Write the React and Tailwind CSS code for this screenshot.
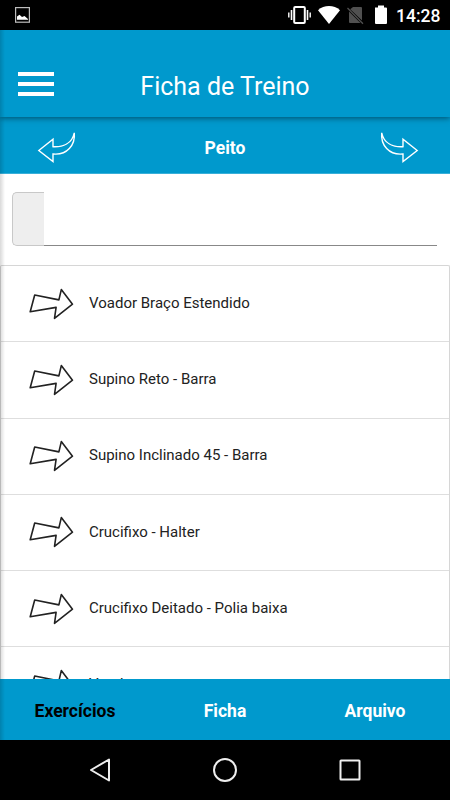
import React from 'react';

const exercises = [
    'Voador Braço Estendido',
    'Supino Reto - Barra',
    'Supino Inclinado 45 - Barra',
    'Crucifixo - Halter',
    'Crucifixo Deitado - Polia baixa',
    'Voador',
];

const tabs = ['Exercícios', 'Ficha', 'Arquivo'];

const StatusBar = () => (
    <div className="h-[30px] shrink-0 bg-black flex items-center justify-between pl-[15px] pr-[10px]">
        <svg width="15" height="16" viewBox="0 0 15 16">
            <rect x="0.6" y="0.6" width="13.8" height="14.6" fill="none" stroke="#bdbdbd" strokeWidth="1.2" />
            <path d="M2 12.8V9.5L4.5 7.8L7 10L9.5 9L13 12V12.8Z" fill="#fff" />
        </svg>
        <div className="flex items-center">
            <svg width="100" height="20" viewBox="288 5 100 20">
                <rect x="294.2" y="7" width="10.6" height="16" rx="1" fill="none" stroke="#fff" strokeWidth="2" />
                <path d="M291.5 10V20M307.5 10V20" stroke="#fff" strokeWidth="1.6" />
                <path d="M288.8 12.5V17.5M310.2 12.5V17.5" stroke="#fff" strokeWidth="1.4" />
                <path d="M318 10.2C324 4.6 334 4.6 340 10.2L329 24Z" fill="#fff" />
                <path d="M353 7H361Q362 7 362 8V20.6L350.2 9.2ZM349 11.5L360.5 23H350Q349 23 349 22Z" fill="#505050" />
                <path d="M347.5 8L363 23.8" stroke="#505050" strokeWidth="1.3" />
                <path d="M375 7.5H378V5.5H384V7.5H386Q387 7.5 387 8.5V23Q387 24 386 24H376Q375 24 375 23Z" fill="#fff" />
            </svg>
            <span className="ml-2 w-[44px] text-white text-[17.5px] leading-[20px] font-medium translate-y-px">14:28</span>
        </div>
    </div>
);

const CurvedArrow = ({ flipped }) => (
    <svg width="40" height="34" viewBox="0 0 40 34" className={flipped ? 'mt-[7px] -scale-x-100' : 'mt-[7px]'}>
        <path
            d="M1.8 18.5L16 7.3V14.7C26 15.2 35 11.5 37.3 .8C38.5 13 30 23.5 16 22V29.6Z"
            fill="none"
            stroke="#fff"
            strokeWidth="1.4"
        />
    </svg>
);

const RowArrow = () => (
    <svg width="46" height="34" viewBox="0 0 46 34" className="shrink-0">
        <path
            d="M1.2 24.8L5.7 8L29.9 12.9L32.3 2.6L43.5 17.2L25.5 31.3L27.1 20.4Z"
            fill="#fff"
            stroke="#222"
            strokeWidth="1.6"
            strokeLinejoin="round"
        />
    </svg>
);

const Header = () => (
    <header className="relative z-10 h-[87px] shrink-0 bg-[#0099cd] flex items-center pl-[18px] shadow-[0_1px_6px_rgba(0,0,0,0.5)]">
        <div className="w-9 flex flex-col gap-[6px] pt-[21px]">
            <div className="h-1 bg-white" />
            <div className="h-1 bg-white" />
            <div className="h-1 bg-white" />
        </div>
        <h1 className="flex-1 pt-[27px] pr-[54px] text-center text-[25px] leading-[30px] text-white">Ficha de Treino</h1>
    </header>
);

const App = () => {
    return (
        <div className="w-[450px] h-[800px] flex flex-col overflow-hidden bg-white font-['Roboto','Liberation_Sans',sans-serif]">
            <StatusBar />
            <main className="relative h-[710px] flex flex-col overflow-hidden">
                <Header />

                <div className="h-[57px] shrink-0 bg-[#0099cd] border-b border-[#39afd8] flex items-center justify-between pl-[37px] pr-[31px]">
                    <CurvedArrow />
                    <span className="pt-[6px] pr-[6px] text-white text-[17.5px] font-bold">Peito</span>
                    <CurvedArrow flipped />
                </div>

                <div className="h-[91px] shrink-0 pt-[18px] pl-3 pr-[13px]">
                    <div className="h-[54px] flex">
                        <div className="w-8 bg-[#eee] border border-r-0 border-[#c8c8c8] rounded-l-[5px]" />
                        <div className="flex-1 border-b border-[#888]" />
                    </div>
                </div>

                <ul className="flex-1 min-h-0 overflow-hidden border border-b-0 border-[#d6d6d6] rounded-t-[2px]">
                    {exercises.map(name => (
                        <li key={name} className="h-[76.25px] flex items-center gap-[14px] pl-7 border-b border-[#dedede]">
                            <RowArrow />
                            <span className="pb-px text-[15px] text-[#222]">{name}</span>
                        </li>
                    ))}
                </ul>

                <nav className="h-[61px] shrink-0 bg-[#0099cd] grid grid-cols-3 items-center pt-[3px]">
                    {tabs.map((tab, i) => (
                        <span key={tab} className={`text-center text-[17.5px] font-bold ${i === 0 ? 'text-black' : 'text-white'}`}>
                            {tab}
                        </span>
                    ))}
                </nav>

                {/* drawer edge shadow */}
                <div className="absolute z-20 left-0 inset-y-0 w-[5px] bg-linear-to-r from-black/15 to-transparent" />
            </main>
            <div className="h-[60px] shrink-0 bg-black grid grid-cols-3 place-items-center">
                <svg width="24" height="26" viewBox="0 0 24 26" className="translate-x-[25px]">
                    <path d="M21 2.5V23.5L3 13Z" fill="none" stroke="#eee" strokeWidth="2" strokeLinejoin="round" />
                </svg>
                <svg width="26" height="26" viewBox="0 0 26 26">
                    <circle cx="13" cy="13" r="11" fill="none" stroke="#eee" strokeWidth="2" />
                </svg>
                <svg width="24" height="24" viewBox="0 0 24 24" className="-translate-x-[25px]">
                    <rect x="2.5" y="2.5" width="19" height="19" rx="0.5" fill="none" stroke="#eee" strokeWidth="2" />
                </svg>
            </div>
        </div>
    );
};

export default App;
